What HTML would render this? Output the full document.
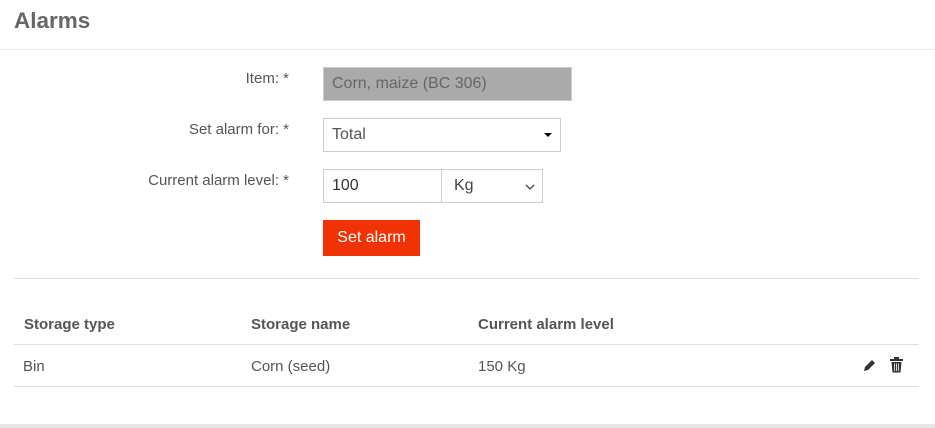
<!DOCTYPE html><html><head><style>
body{margin:0;width:935px;height:428px;background:#fff;font-family:"Liberation Sans",sans-serif;position:relative;overflow:hidden;color:#555}
.a{position:absolute}
.l{position:absolute;right:646px;font-size:15px;color:#555;text-align:right;white-space:nowrap}
.box{position:absolute;box-sizing:border-box;border:1px solid #ccc;font-size:16px;padding-left:8px;display:flex;align-items:center;color:#555}
.h{position:absolute;height:1px;background:#ddd}
.th{position:absolute;top:316px;font-size:15px;font-weight:bold;color:#555}
.td{position:absolute;top:358px;font-size:15px;color:#555}
</style></head><body>
<div class="a" style="left:14px;top:8px;font-size:22.5px;font-weight:bold;color:#666">Alarms</div>
<div class="h" style="left:0;top:49px;width:935px;background:#eee"></div>
<div class="l" style="top:70px">Item: *</div>
<div class="l" style="top:121px">Set alarm for: *</div>
<div class="l" style="top:172px">Current alarm level: *</div>
<div class="box" style="left:323px;top:67px;width:249px;height:34px;background:#aaa;border-color:#ccc;color:#666">Corn, maize (BC 306)</div>
<div class="box" style="left:323px;top:118px;width:238px;height:34px">Total<span class="a" style="right:8px;top:14px;width:0;height:0;border-left:4px solid transparent;border-right:4px solid transparent;border-top:4px solid #000"></span></div>
<div class="box" style="left:323px;top:169px;width:119px;height:34px;color:#333">100</div>
<div class="box" style="left:441px;top:169px;width:102px;height:34px;padding-left:12px;color:#444">Kg<svg class="a" style="right:7px;top:14px" width="10" height="7" viewBox="0 0 10 7"><path d="M1 1l4 4 4-4" fill="none" stroke="#444" stroke-width="1.3"/></svg></div>
<div class="a" style="left:323px;top:220px;width:97px;height:36px;background:#f03205;color:#fff;font-size:16px;display:flex;align-items:center;justify-content:center">Set alarm</div>
<div class="h" style="left:14px;top:278px;width:905px"></div>
<div class="th" style="left:24px">Storage type</div>
<div class="th" style="left:251px">Storage name</div>
<div class="th" style="left:478px">Current alarm level</div>
<div class="h" style="left:14px;top:344px;width:905px"></div>
<div class="td" style="left:23px">Bin</div>
<div class="td" style="left:251px">Corn (seed)</div>
<div class="td" style="left:478px">150 Kg</div>
<svg class="a" style="left:863px;top:358px" width="14" height="14" viewBox="0 0 14 14"><path d="M1 13l1-4 7-7 3 3-7 7z" fill="#333"/></svg>
<svg class="a" style="left:890px;top:357px" width="13" height="16" viewBox="0 0 13 16"><rect x="4" y="0" width="5" height="2" fill="#333"/><rect x="0" y="2" width="13" height="2" fill="#333"/><path d="M1.5 5h10l-1 10.5h-8z" fill="#333"/><path d="M4.5 6.5v7.5M6.5 6.5v7.5M8.5 6.5v7.5" stroke="#fff" stroke-width=".8"/></svg>
<div class="h" style="left:14px;top:386px;width:905px"></div>
<div class="a" style="left:0;top:424px;width:935px;height:4px;background:#e5e5e5"></div>
</body></html>
